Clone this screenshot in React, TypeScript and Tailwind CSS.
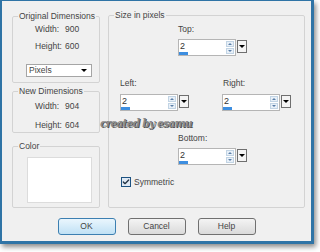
import { Check } from 'lucide-react';

const font = { fontFamily: '"Liberation Sans", Arial, sans-serif' };

function SpinInput({ value }: { value: string }) {
  return (
    <div className="flex items-start gap-[1px]">
      <div className="relative flex h-[17px] w-[58px] items-start border border-[#b5b5b5] bg-white">
        <span className="pl-[1px] pt-[1px] text-[9px] leading-[11px] text-[#333]">{value}</span>
        <div className="ml-auto mr-[1px] mt-[1px] flex h-[13px] w-[8px] flex-col gap-[1px]">
          <div className="flex h-[6px] items-center justify-center border border-[#c2d4e4] bg-[#e8f0f8]">
            <span className="h-0 w-0 border-x-[2px] border-b-[2px] border-x-transparent border-b-[#5a7fa8]" />
          </div>
          <div className="flex h-[6px] items-center justify-center border border-[#c2d4e4] bg-[#e8f0f8]">
            <span className="h-0 w-0 border-x-[2px] border-t-[2px] border-x-transparent border-t-[#5a7fa8]" />
          </div>
        </div>
        <div className="absolute bottom-0 left-0 h-[3px] w-[9px] bg-[#3d8ee0]" />
      </div>
      <div className="mt-[1px] flex h-[13px] w-[10px] items-center justify-center border border-[#6f6f6f] bg-[#f4f4f4]">
        <span className="h-0 w-0 border-x-[3px] border-t-[3px] border-x-transparent border-t-black" />
      </div>
    </div>
  );
}

function Group({
  title,
  className,
  children,
}: {
  title: string;
  className: string;
  children?: React.ReactNode;
}) {
  return (
    <fieldset className={`rounded-[2px] border border-[#d3d3d3] ${className}`}>
      <legend className="ml-[5px] px-[1px] text-[8.5px] leading-[10px] text-[#444]">
        {title}
      </legend>
      {children}
    </fieldset>
  );
}

function Dim({ w, h, gap }: { w: string; h: string; gap: string }) {
  return (
    <div className={`grid grid-cols-[30px_auto] pl-[22px] text-[8.5px] leading-[10px] text-[#444] ${gap}`}>
      <span>Width:</span>
      <span>{w}</span>
      <span>Height:</span>
      <span>{h}</span>
    </div>
  );
}

function Btn({ label, primary }: { label: string; primary?: boolean }) {
  return (
    <button
      className={`flex h-[17px] w-[58px] items-center justify-center rounded-[3px] border text-[8.5px] text-[#444] ${
        primary
          ? 'border-[#3c7fb1] bg-gradient-to-b from-[#eaf6fd] to-[#c0e1f5]'
          : 'border-[#707070] bg-gradient-to-b from-[#f4f4f4] to-[#dadada]'
      }`}
    >
      {label}
    </button>
  );
}

export default function App() {
  return (
    <div className="h-[252px] w-[320px] bg-white" style={font}>
      <div className="relative h-[244px] w-[314px] border-b-[3px] border-l-2 border-r-[3px] border-t border-[#2f74a6] bg-[#f0f0f0] shadow-[2px_3px_5px_rgba(0,0,0,0.45)]">
        <div className="flex gap-[8px] pl-[10px] pt-[9px]">
          <div className="flex w-[88px] flex-col">
            <Group title="Original Dimensions" className="mt-[1px] h-[72px]">
              <Dim w="900" h="600" gap="mt-[3px] gap-y-[7px]" />
              <div className="ml-[13px] mt-[13px] flex h-[13px] w-[66px] items-center border border-[#a5a5a5] bg-white pl-[2px] pr-[4px] text-[8.5px] text-[#444]">
                <span>Pixels</span>
                <span className="ml-auto h-0 w-0 border-x-[3px] border-t-[3px] border-x-transparent border-t-black" />
              </div>
            </Group>
            <Group title="New Dimensions" className="mt-[3px] h-[47px]">
              <Dim w="904" h="604" gap="mt-[5px] gap-y-[9px]" />
            </Group>
            <Group title="Color" className="mt-[8px] h-[67px]">
              <div className="ml-[14px] mt-[6px] h-[46px] w-[65px] border border-[#dcdcdc] bg-white" />
            </Group>
          </div>
          <Group title="Size in pixels" className="h-[198px] w-[197px]">
            <div className="flex flex-col text-[8.5px] leading-[10px] text-[#444]">
              <div className="mt-[4px] pl-[69px]">
                <div>Top:</div>
                <div className="mt-[5px]">
                  <SpinInput value="2" />
                </div>
              </div>
              <div className="mt-[22px] flex gap-[33px] pl-[11px]">
                <div>
                  <div>Left:</div>
                  <div className="mt-[6px]">
                    <SpinInput value="2" />
                  </div>
                </div>
                <div>
                  <div className="pl-[1px]">Right:</div>
                  <div className="mt-[6px]">
                    <SpinInput value="2" />
                  </div>
                </div>
              </div>
              <div className="mt-[22px] pl-[69px]">
                <div>Bottom:</div>
                <div className="mt-[5px]">
                  <SpinInput value="2" />
                </div>
              </div>
              <div className="mt-[12px] flex items-center gap-[3px] pl-[12px]">
                <span className="flex h-[10px] w-[10px] items-center justify-center border border-[#1d5281] bg-[#dfe9f4]">
                  <Check size={8} strokeWidth={4} color="#223344" />
                </span>
                <span>Symmetric</span>
              </div>
            </div>
          </Group>
        </div>
        <div className="mt-[10px] flex justify-center gap-[12px]">
          <Btn label="OK" primary />
          <Btn label="Cancel" />
          <Btn label="Help" />
        </div>
        <div
          className="absolute left-[98px] top-[115px] text-[10.5px] font-bold italic tracking-[-0.7px] text-[#8a8a8a] [text-shadow:1px_1px_0_#555]"
          style={{ fontFamily: '"DejaVu Serif", serif' }}
        >
          created by esamu
        </div>
      </div>
    </div>
  );
}
